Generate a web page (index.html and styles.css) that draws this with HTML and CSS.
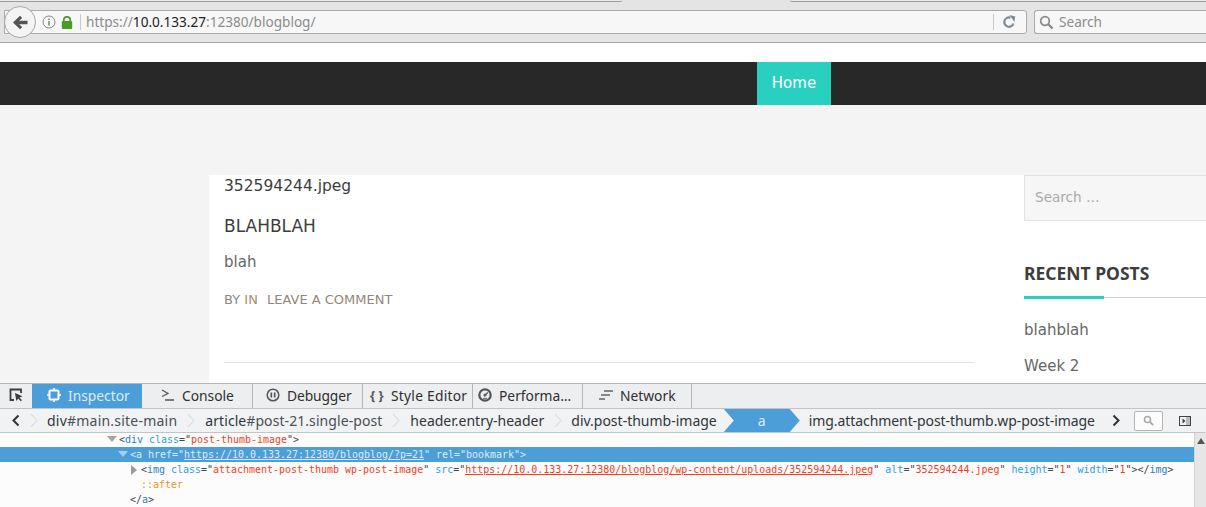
FILE: index.html
```html
<!DOCTYPE html>
<html lang="en">
<head>
<meta charset="utf-8">
<title>BLAHBLAH</title>
<link rel="stylesheet" href="styles.css">
</head>
<body>
<div class="browser">
  <div class="tabstrip">
    <div class="tab-edge tab-edge-a"></div>
    <div class="tab-edge tab-edge-b"></div>
  </div>
  <div class="navbar">
    <div class="urlbar">
      <button class="back" aria-label="Back">
        <svg width="15" height="15" viewBox="0 0 16 16"><path d="M7.500 .8 0 8l7.500 7.200 2.300-2.300L6.500 9.800H15.500V6.200H6.500l3.300-3.100z" fill="#555"/></svg>
      </button>
      <svg class="info" width="14" height="14" viewBox="0 0 14 14"><circle cx="7" cy="7" r="6" fill="none" stroke="#888" stroke-width="1"/><rect x="6.200" y="6" width="1.600" height="4.500" fill="#888"/><rect x="6.200" y="3.500" width="1.600" height="1.600" fill="#888"/></svg>
      <svg class="lock" width="12" height="13" viewBox="0 0 12 13"><path d="M2.800 5.500V4a3.200 3.200 0 0 1 6.400 0v1.500" fill="none" stroke="#4a9b27" stroke-width="1.700"/><rect x=".8" y="5" width="10.400" height="8" rx="1" fill="#4a9b27"/></svg>
      <span class="vsep"></span>
      <span class="url">https://<b>10.0.133.27</b>:12380/blogblog/</span>
      <span class="vsep vsep-end"></span>
      <svg class="reload" width="14" height="14" viewBox="0 0 14 14"><path d="M11.500 8.500A4.700 4.700 0 1 1 8.500 2.600" fill="none" stroke="#7f8c96" stroke-width="2.200"/><path d="M7 .5 13 1v5.500z" fill="#7f8c96" transform="rotate(8 10 3)"/></svg>
    </div>
    <div class="searchbar">
      <svg width="15" height="15" viewBox="0 0 15 15"><circle cx="6" cy="6" r="4.300" fill="none" stroke="#8a8a8a" stroke-width="1.700"/><path d="m9.300 9.300 4.300 4.300" stroke="#8a8a8a" stroke-width="2.200"/></svg>
      <span class="search-label">Search</span>
    </div>
  </div>
</div>

<main class="page">
  <div class="masthead">
    <a class="home">Home</a>
  </div>
  <div class="content">
    <article class="post">
      <p class="filename">352594244.jpeg</p>
      <h1 class="title">BLAHBLAH</h1>
      <p class="excerpt">blah</p>
      <p class="meta"><span class="by">BY</span> <span class="in">IN</span> <span class="comment">LEAVE A COMMENT</span></p>
      <hr class="rule">
    </article>
    <aside class="sidebar">
      <div class="site-search">Search …</div>
      <h2 class="widget-title">RECENT POSTS</h2>
      <p class="recent">blahblah</p>
      <p class="recent">Week 2</p>
    </aside>
  </div>
</main>

<section class="devtools">
  <div class="dt-tabs">
    <div class="picker">
      <svg width="14" height="14" viewBox="0 0 14 14"><path d="M12 5V1.500H1.500V12H5" fill="none" stroke="#3c3c3c" stroke-width="1.800"/><path d="m6 5 7.500 3.300-3 1.200 2.500 2.800-1.300 1-2.400-2.800L7.300 13z" fill="#3c3c3c"/></svg>
    </div>
    <div class="dt-tab active tab-inspector">
      <svg width="14" height="14" viewBox="0 0 14 14"><rect x="2.500" y="2.500" width="9" height="9" rx="1" fill="none" stroke="#fff" stroke-width="2"/><path d="M7 0v2.500M7 11.500V14M0 7h2.500M11.500 7H14" stroke="#fff" stroke-width="1.500"/></svg>
      <span>Inspector</span>
    </div>
    <div class="dt-tab tab-console">
      <svg width="14" height="14" viewBox="0 0 14 14"><path d="m1 2 6 3.500L1 8.500" fill="none" stroke="#555" stroke-width="1.300"/><path d="M4 12h9" stroke="#555" stroke-width="1.500"/></svg>
      <span>Console</span>
    </div>
    <div class="dt-tab tab-debugger">
      <svg width="14" height="14" viewBox="0 0 14 14"><circle cx="7" cy="7" r="5.800" fill="none" stroke="#555" stroke-width="1.500"/><path d="M5.300 4.500v5M8.700 4.500v5" stroke="#555" stroke-width="1.700"/></svg>
      <span class="debugger-label">Debugger</span>
    </div>
    <div class="dt-tab tab-style">
      <span class="braces">{ }</span>
      <span class="style-label">Style Editor</span>
    </div>
    <div class="dt-tab tab-perf">
      <svg width="14" height="14" viewBox="0 0 14 14"><circle cx="7" cy="7" r="5.700" fill="none" stroke="#555" stroke-width="2.200"/><circle cx="7" cy="7" r="1.600" fill="#777"/><path d="M6 8 10 4.500" stroke="#555" stroke-width="1.200"/><path d="M5 10.500h4" stroke="#777" stroke-width="1.300"/></svg>
      <span>Performa…</span>
    </div>
    <div class="dt-tab tab-network">
      <svg width="14" height="12" viewBox="0 0 14 12"><path d="M5 2h9M2 6h9M0 10h6" stroke="#666" stroke-width="1.400"/></svg>
      <span>Network</span>
    </div>
  </div>
  <div class="crumbs">
    <svg class="arrow" width="10" height="13" viewBox="0 0 10 13"><path d="M7.500 1.500 2.500 6.500l5 5" fill="none" stroke="#333" stroke-width="2"/></svg>
    <svg class="sep sep-first" width="9" height="15" viewBox="0 0 9 15"><path d="m1 1 6 6.500L1 14" fill="none" stroke="#d0d2d4"/></svg>
    <span class="crumb crumb-first">div<i>#main.site-main</i></span>
    <svg class="sep" width="9" height="15" viewBox="0 0 9 15"><path d="m1 1 6 6.500L1 14" fill="none" stroke="#d0d2d4"/></svg>
    <span class="crumb crumb-article">article<i>#post-21.single-post</i></span>
    <svg class="sep" width="9" height="15" viewBox="0 0 9 15"><path d="m1 1 6 6.500L1 14" fill="none" stroke="#d0d2d4"/></svg>
    <span class="crumb">header.entry-header</span>
    <svg class="sep sep-last" width="9" height="15" viewBox="0 0 9 15"><path d="m1 1 6 6.500L1 14" fill="none" stroke="#d0d2d4"/></svg>
    <span class="crumb">div.post-thumb-image</span>
    <span class="crumb-active">a</span>
    <span class="crumb crumb-last">img.attachment-post-thumb.wp-post-image</span>
    <svg class="arrow arrow-next" width="10" height="13" viewBox="0 0 10 13"><path d="m2.500 1.500 5 5-5 5" fill="none" stroke="#333" stroke-width="2"/></svg>
    <div class="crumb-search">
      <svg width="11" height="11" viewBox="0 0 11 11"><circle cx="4.500" cy="4.500" r="3" fill="none" stroke="#aaa" stroke-width="1.600"/><path d="m7 7 3.200 3.200" stroke="#aaa" stroke-width="1.800"/></svg>
    </div>
    <svg class="pane" width="12" height="10" viewBox="0 0 12 10"><rect x=".5" y=".5" width="11" height="9" fill="none" stroke="#444"/><rect x="7" y="1" width="4" height="8" fill="#bbb"/><path d="m3.500 2.500 3 2.500-3 2.500z" fill="#444"/></svg>
  </div>
  <div class="markup-wrap">
    <div class="markup">
      <div class="line indent-1"><span class="tw tw-open"></span><span class="p">&lt;</span><span class="tag">div</span> <span class="attr">class</span><span class="p">="</span><span class="val">post-thumb-image</span><span class="p">"&gt;</span></div>
      <div class="line indent-2 selected"><span class="tw tw-open"></span>&lt;a href="<u>https://10.0.133.27:12380/blogblog/?p=21</u>" rel="bookmark"&gt;</div>
      <div class="line indent-3"><span class="tw tw-closed"></span><span class="p">&lt;</span><span class="tag">img</span> <span class="attr">class</span><span class="p">="</span><span class="val">attachment-post-thumb wp-post-image</span><span class="p">"</span> <span class="attr">src</span><span class="p">="</span><u class="val">https://10.0.133.27:12380/blogblog/wp-content/uploads/352594244.jpeg</u><span class="p">"</span> <span class="attr">alt</span><span class="p">="</span><span class="val">352594244.jpeg</span><span class="p">"</span> <span class="attr">height</span><span class="p">="</span><span class="val">1</span><span class="p">"</span> <span class="attr">width</span><span class="p">="</span><span class="val">1</span><span class="p">"&gt;&lt;/</span><span class="tag">img</span><span class="p">&gt;</span></div>
      <div class="line indent-4"><span class="pseudo">::after</span></div>
      <div class="line indent-5"><span class="p">&lt;/</span><span class="tag">a</span><span class="p">&gt;</span></div>
    </div>
    <div class="scrollbar"><span class="scroll-up"></span></div>
  </div>
</section>
</body>
</html>
```

FILE: styles.css
```css
* { box-sizing: border-box; }
html, body { margin: 0; height: 507px; overflow: hidden; }
body {
  display: flex;
  flex-direction: column;
  font-family: "DejaVu Sans", sans-serif;
  background: #fff;
}

.browser { flex: none; height: 43px; background: #e4e4e4; border-bottom: 1px solid #a9a9a9; font-family: "Noto Sans", sans-serif; }
.tabstrip { height: 2px; display: flex; justify-content: space-between; }
.tab-edge { height: 2px; border-bottom: 1px solid #9c9c9c; background: #ececec; }
.tab-edge-a { width: 622px; border-radius: 0 0 4px 0; }
.tab-edge-b { width: 416px; border-radius: 0 0 0 4px; }
.navbar { display: flex; gap: 7px; padding: 8px 0 0 4px; align-items: flex-start; }
.urlbar {
  width: 1023px; height: 24px;
  display: flex; align-items: center;
  background: #f7f7f7; border: 1px solid #ababab; border-radius: 0 3px 3px 0;
  position: relative; padding-left: 37px;
}
.back {
  position: absolute; left: -1px; top: -5px;
  width: 32px; height: 32px; border-radius: 50%;
  background: #f4f4f4; border: 1px solid #a8a8a8; padding: 0;
  display: flex; align-items: center; justify-content: center;
}
.info { flex: none; margin-right: 5px; }
.lock { flex: none; margin-right: 7px; }
.vsep { flex: none; width: 1px; height: 16px; background: #c9c9c9; margin-right: 5px; }
.url { font-size: 13.600px; padding-bottom: 2px; color: #8c8c8c; white-space: nowrap; }
.url b { font-weight: 400; color: #222; }
.vsep-end { margin: 0 0 0 auto; }
.reload { flex: none; margin: 0 10px 0 8px; }
.searchbar {
  flex: 1; height: 24px; margin-right: -2px;
  display: flex; align-items: center; gap: 5px; padding-left: 4px;
  background: #f7f7f7; border: 1px solid #ababab; border-right: 0; border-radius: 3px 0 0 3px;
  font-size: 13.600px; color: #8c8c8c;
}
.search-label { padding-bottom: 2px; }

.page { flex: 1; min-height: 0; background: #f4f4f4; overflow: hidden; }
.masthead { margin-top: 19px; height: 43px; background: #282828; padding-left: 757px; box-shadow: 0 -19px 0 #fff; }
.home {
  display: flex; align-items: center; justify-content: center;
  width: 74px; height: 43px; padding-bottom: 2px; background: #29d0c0; color: #fff; font-size: 15px;
}
.content { display: flex; margin: 70px 0 0 209px; height: 300px; background: #fff; }
.post { width: 765px; padding: 1px 0 0 15px; flex: none; }
.filename { margin: 0; font-size: 15.500px; line-height: 20px; color: #3d3d3d; height: 20px; }
.title { margin: 19px 0 0; font-size: 17px; font-weight: 400; line-height: 22px; color: #3d3d3d; }
.excerpt { margin: 15px 0 0; font-size: 15px; line-height: 20px; color: #666; }
.meta { margin: 20px 0 0; font-size: 13px; line-height: 16px; color: #8a8a8a; white-space: nowrap; }
.in { color: #b08a68; margin-right: 5px; }
.by { color: #888; }
.comment { color: #93867a; }
.rule { margin: 54px 0 0; width: 750px; border: 0; height: 1px; background: #e4e4e4; }
.sidebar { margin-left: 50px; flex: 1; }
.site-search {
  height: 46px; padding: 0 0 2px 10px; display: flex; align-items: center;
  background: #f6f6f6; border: 1px solid #e2e2e2; border-right: 0;
  font-size: 13.600px; color: #a9a9a9;
}
.widget-title {
  margin: 41px 0 0; height: 36px; padding-top: 1px; font: 700 17.500px/21px "Noto Sans", sans-serif; color: #3d3d3d;
  border-bottom: 1px solid #cfcfcf; position: relative;
}
.widget-title::after {
  content: ""; position: absolute; left: 0; bottom: -2px; width: 80px; height: 3px; background: #29d0c0;
}
.recent { margin: 0; font-size: 15px; line-height: 20px; color: #666; }
.widget-title + .recent { margin-top: 22px; }
.recent + .recent { margin-top: 16px; }

.devtools { flex: none; height: 124px; display: flex; flex-direction: column; border-top: 1px solid #b5b5b5; background: #fcfcfc; font-family: "Noto Sans", sans-serif; }
.dt-tabs { height: 24px; flex: none; display: flex; background: #edeef0; font-size: 13.800px; color: #2f2f2f; }
.picker { width: 32px; padding-bottom: 2px; display: flex; align-items: center; justify-content: center; }
.dt-tab { display: flex; align-items: center; gap: 7px; height: 24px; padding-bottom: 2px; border-right: 1px solid #b5b5b5; white-space: nowrap; }
.dt-tab.active { background: #4c9ed9; color: #dcecf8; border-right: 0; }
.tab-inspector { width: 110px; padding-left: 15px; }
.tab-console { width: 111px; padding-left: 19px; }
.tab-debugger { width: 110px; padding-left: 13px; }
.tab-style { width: 110px; padding-left: 7px; }
.tab-perf { width: 110px; padding-left: 5px; }
.tab-network { width: 109px; padding-left: 16px; }
.debugger-label { letter-spacing: -.1px; }
.braces { width: 14px; font-size: 13px; font-weight: 700; color: #555; white-space: nowrap; }
.style-label { letter-spacing: .25px; }
.crumbs {
  flex: none; height: 25px; display: flex; align-items: center; font-size: 14px; color: #30353a;
  background: #f1f2f3; border-top: 1px solid #c4c4c4; border-bottom: 1px solid #c4c4c4; white-space: nowrap;
}
.crumbs i { font-style: normal; color: #4a5056; }
.arrow { flex: none; margin-left: 11px; }
.sep { flex: none; margin: 0 9.500px; }
.sep-first { margin: 0 8px 0 9px; }
.sep-last { margin-right: 8.500px; }
.crumb { flex: none; }
.crumb-first { letter-spacing: .22px; }
.crumb-article { letter-spacing: .07px; }
.crumb-active {
  flex: none; width: 76px; height: 23px; display: flex; align-items: center; justify-content: center;
  background: #4c9ed9; color: #dcecf8; margin-left: 7px;
  clip-path: polygon(0 0, 66px 0, 100% 50%, 66px 100%, 0 100%, 10px 50%);
}
.crumb-last { margin-left: 9px; letter-spacing: -.08px; }
.arrow-next { margin-left: 16px; }
.crumb-search {
  flex: none; width: 29px; height: 20px; margin-left: 13px; background: #fcfcfc; border: 1px solid #b5b5b5; border-radius: 2px;
  display: flex; align-items: center; justify-content: center;
}
.pane { flex: none; margin-left: 16px; }
.markup-wrap { flex: 1; min-height: 0; display: flex; overflow: hidden; }
.markup { flex: 1; min-width: 0; margin-top: -1px; font-family: "DejaVu Sans Mono", monospace; font-size: 9.975px; }
.line { height: 15px; line-height: 15px; white-space: nowrap; position: relative; color: #555; }
.line.selected { background: #4c9ed9; color: #dcecf8; }
.indent-1 { padding-left: 119px; }
.indent-2 { padding-left: 130px; }
.indent-3 { padding-left: 141px; }
.indent-4 { padding-left: 141px; }
.indent-5 { padding-left: 130px; }
.tw { position: absolute; top: 4px; }
.tw-open { margin-left: -12px; width: 0; height: 0; border: 5px solid transparent; border-top: 6px solid #a5a5a5; border-bottom: 0; }
.selected .tw-open { border-top-color: #a8cfea; }
.tw-closed { margin-left: -10px; top: 3px; width: 0; height: 0; border: 5px solid transparent; border-left: 6px solid #9a9a9a; border-right: 0; }
.tag { color: #2f7fc0; }
.attr { color: #2a9fe0; }
.val { color: #f0401c; }
.p { color: #444; }
.pseudo { color: #e2962a; }
.scrollbar { flex: none; width: 12px; background: #e6e6e6; border-left: 1px solid #d4d4d4; position: relative; }
.scroll-up { position: absolute; left: 2px; top: 5px; width: 0; height: 0; border: 4px solid transparent; border-bottom: 6px solid #555; border-top: 0; }
```
